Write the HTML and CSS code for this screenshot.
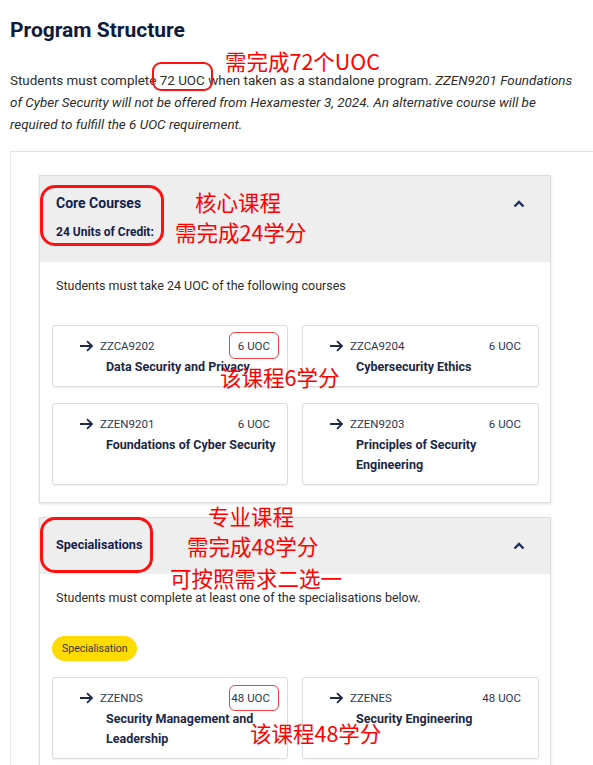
FILE: index.html
```html
<!DOCTYPE html>
<html lang="en">
<head>
  <meta charset="UTF-8" />
  <meta name="viewport" content="width=device-width, initial-scale=1.0"/>
  <title>Program Structure</title>
  <link rel="stylesheet" href="styles.css">
</head>
<body>

  <h1>Program Structure</h1>

  <p class="intro">
    Students must complete 72 UOC when taken as a standalone program.
    <em>ZZEN9201 Foundations of Cyber Security will not be offered from Hexamester 3, 2024. An alternative course will be required to fulfill the 6 UOC requirement.</em>
  </p>

  <div class="structure">

    <div class="group">
      <div class="group-head">
        <div>
          <h2>Core Courses</h2>
          <div class="credit">24 Units of Credit:</div>
        </div>
        <svg class="chevron" width="12" height="8" viewBox="0 0 12 8"><path d="M1.5 6.5 L6 2 L10.5 6.5" fill="none" stroke="#1d2f5e" stroke-width="2.4"/></svg>
      </div>
      <div class="group-body">
        <p>Students must take 24 UOC of the following courses</p>
        <div class="course-grid">
          <div class="course">
            <div class="course-top">
              <svg class="arrow" width="15" height="12" viewBox="0 0 15 12"><path d="M1 6 H13 M8 1.2 L13 6 L8 10.8" fill="none" stroke="#1d2a48" stroke-width="1.8"/></svg>
              <span class="code">ZZCA9202</span>
              <span class="uoc">6 UOC</span>
            </div>
            <div class="course-name">Data Security and Privacy</div>
          </div>
          <div class="course">
            <div class="course-top">
              <svg class="arrow" width="15" height="12" viewBox="0 0 15 12"><path d="M1 6 H13 M8 1.2 L13 6 L8 10.8" fill="none" stroke="#1d2a48" stroke-width="1.8"/></svg>
              <span class="code">ZZCA9204</span>
              <span class="uoc">6 UOC</span>
            </div>
            <div class="course-name">Cybersecurity Ethics</div>
          </div>
          <div class="course">
            <div class="course-top">
              <svg class="arrow" width="15" height="12" viewBox="0 0 15 12"><path d="M1 6 H13 M8 1.2 L13 6 L8 10.8" fill="none" stroke="#1d2a48" stroke-width="1.8"/></svg>
              <span class="code">ZZEN9201</span>
              <span class="uoc">6 UOC</span>
            </div>
            <div class="course-name">Foundations of Cyber Security</div>
          </div>
          <div class="course">
            <div class="course-top">
              <svg class="arrow" width="15" height="12" viewBox="0 0 15 12"><path d="M1 6 H13 M8 1.2 L13 6 L8 10.8" fill="none" stroke="#1d2a48" stroke-width="1.8"/></svg>
              <span class="code">ZZEN9203</span>
              <span class="uoc">6 UOC</span>
            </div>
            <div class="course-name">Principles of Security Engineering</div>
          </div>
        </div>
      </div>
    </div>

    <div class="group">
      <div class="group-head short">
        <h2 class="small">Specialisations</h2>
        <svg class="chevron" width="12" height="8" viewBox="0 0 12 8"><path d="M1.5 6.5 L6 2 L10.5 6.5" fill="none" stroke="#1d2f5e" stroke-width="2.4"/></svg>
      </div>
      <div class="group-body">
        <p>Students must complete at least one of the specialisations below.</p>
        <span class="pill">Specialisation</span>
        <div class="course-grid">
          <div class="course">
            <div class="course-top">
              <svg class="arrow" width="15" height="12" viewBox="0 0 15 12"><path d="M1 6 H13 M8 1.2 L13 6 L8 10.8" fill="none" stroke="#1d2a48" stroke-width="1.8"/></svg>
              <span class="code">ZZENDS</span>
              <span class="uoc">48 UOC</span>
            </div>
            <div class="course-name">Security Management and Leadership</div>
          </div>
          <div class="course">
            <div class="course-top">
              <svg class="arrow" width="15" height="12" viewBox="0 0 15 12"><path d="M1 6 H13 M8 1.2 L13 6 L8 10.8" fill="none" stroke="#1d2a48" stroke-width="1.8"/></svg>
              <span class="code">ZZENES</span>
              <span class="uoc">48 UOC</span>
            </div>
            <div class="course-name">Security Engineering</div>
          </div>
        </div>
      </div>
    </div>

  </div>

  <!-- red annotations drawn over the page -->
  <div class="ring ring-72"></div>
  <div class="note note-72">需完成72个UOC</div>

  <div class="ring ring-core"></div>
  <div class="note note-core1">核心课程</div>
  <div class="note note-core2">需完成24学分</div>

  <div class="ring ring-6"></div>
  <div class="note note-6">该课程6学分</div>

  <div class="ring ring-spec"></div>
  <div class="note note-spec1">专业课程</div>
  <div class="note note-spec2">需完成48学分</div>
  <div class="note note-spec3">可按照需求二选一</div>

  <div class="ring ring-48"></div>
  <div class="note note-48">该课程48学分</div>

</body>
</html>
```

FILE: styles.css
```css
* {
  box-sizing: border-box;
}
body {
  font-family: Roboto, "Noto Sans", Arial, sans-serif;
  margin: 0;
  padding: 0 10px;
  background: white;
  color: #2d2d2d;
  position: relative;
  overflow: hidden;
  height: 765px;
}
h1 {
  margin: 18px 0 0;
  font-size: 21px;
  line-height: 24px;
  font-weight: bold;
  color: #0e1b3d;
}
.intro {
  margin: 28px 0 0;
  font-size: 13.45px;
  line-height: 22px;
}
.structure {
  margin: 15px -10px 0 0;
  padding: 23px 42px 0 28px;
  border-top: 1px solid #e2e2e2;
  border-left: 1px solid #e8e8e8;
  box-shadow: 0 -1px 2px rgba(0,0,0,0.04);
}
.group {
  border: 1px solid #dedede;
  box-shadow: 0 1px 3px rgba(0,0,0,0.12);
  margin-bottom: 14px;
  background: white;
}
.group-head {
  background: #eeeeee;
  display: flex;
  justify-content: space-between;
  align-items: flex-start;
  padding: 17px 25px 21px 16px;
}
.group-head.short {
  padding: 17px 25px 19px 16px;
}
.group-head h2 {
  margin: 0;
  font-size: 14px;
  line-height: 20px;
  color: #14214a;
}
.group-head h2.small {
  font-size: 12.6px;
}
.group-head .credit {
  margin-top: 10px;
  font-size: 12px;
  line-height: 18px;
  font-weight: bold;
  color: #14214a;
}
.chevron {
  display: block;
  margin-top: 7px;
}
.group-body {
  padding: 15px 12px 17px;
}
.group-body p {
  margin: 0 0 30px 4px;
  font-size: 12.5px;
  line-height: 18px;
  color: #2d2d2d;
}
.pill {
  display: inline-block;
  background: #ffdb00;
  color: #333;
  font-size: 10.5px;
  line-height: 25px;
  padding: 0 10px;
  border-radius: 13px;
  margin: -1px 0 16px;
}
.course-grid {
  display: grid;
  grid-template-columns: 236px 237px;
  gap: 16px 14px;
}
.course {
  border: 1px solid #dcdcdc;
  border-radius: 3px;
  box-shadow: 0 1px 2px rgba(0,0,0,0.06);
  padding: 11px 17px 9px 26px;
}
.course-top {
  display: flex;
  align-items: center;
  line-height: 18px;
  font-size: 11.5px;
  color: #2c3650;
}
.arrow {
  display: block;
  margin-right: 6px;
}
.code {
  flex: 1;
}
.course-name {
  margin: 2px -12px 0 27px;
  font-size: 12.5px;
  line-height: 20px;
  font-weight: bold;
  color: #1c2746;
}
.ring {
  position: absolute;
  border: 2px solid #ff1010;
  border-radius: 9px;
}
.ring-72 { left: 152px; top: 62px; width: 61px; height: 29px; }
.ring-core { left: 40px; top: 185px; width: 124px; height: 61px; border-width: 3px; border-radius: 15px; }
.ring-6 { left: 229px; top: 332px; width: 50px; height: 27px; border-width: 1.5px; border-color: #f04040; border-radius: 6px; }
.ring-spec { left: 40px; top: 517px; width: 113px; height: 56px; border-width: 3px; border-radius: 15px; }
.ring-48 { left: 229px; top: 685px; width: 50px; height: 26px; border-width: 1.5px; border-color: #f04040; border-radius: 6px; }
.note {
  position: absolute;
  color: #ff0000;
  font-family: "Noto Sans CJK SC", "Noto Sans", sans-serif;
  font-size: 21.5px;
  line-height: 24px;
  white-space: nowrap;
}
.note-72 { left: 225px; top: 49px; }
.note-core1 { left: 195px; top: 190px; }
.note-core2 { left: 175px; top: 220px; }
.note-6 { left: 220px; top: 365px; }
.note-spec1 { left: 208px; top: 504px; }
.note-spec2 { left: 187px; top: 534px; }
.note-spec3 { left: 170px; top: 566px; }
.note-48 { left: 250px; top: 721px; }
```
